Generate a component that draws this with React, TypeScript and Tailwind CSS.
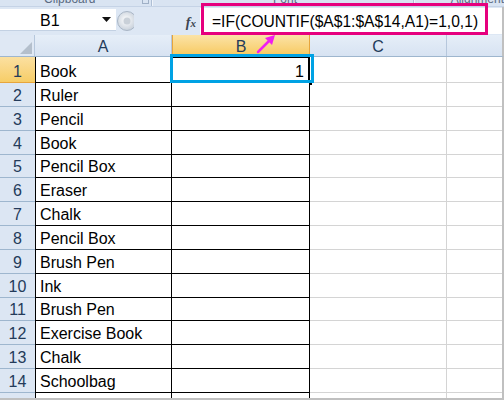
import React from "react";

const items = [
  "Book",
  "Ruler",
  "Pencil",
  "Book",
  "Pencil Box",
  "Eraser",
  "Chalk",
  "Pencil Box",
  "Brush Pen",
  "Ink",
  "Brush Pen",
  "Exercise Book",
  "Chalk",
  "Schoolbag",
];

// row heights include the bottom gridline
const heights = [26, 24, 24, 24, 23, 24, 24, 24, 24, 24, 23, 24, 24, 24];

function RibbonStrip() {
  return (
    <div className="flex h-[7px] overflow-hidden bg-[#d9e4f2] border-b border-[#c5d3e6] text-[12px] text-[#5a6b82]">
      <div className="relative w-[140px] flex justify-center">
        <span className="-mt-[8px] leading-[14px]">Clipboard</span>
      </div>
      <div className="w-[12px] flex justify-center">
        <div className="-mt-[3px] w-[7px] h-[7px] border border-[#9fb0c6]" />
      </div>
      <div className="w-[2px] border-l border-[#aebfd5] bg-white/60" />
      <div className="w-[150px] flex justify-end pr-[6px]">
        <span className="-mt-[8px] leading-[14px]">Font</span>
      </div>
      <div className="w-[110px]" />
      <div className="w-[2px] border-l border-[#aebfd5] bg-white/60" />
      <div className="flex-1 flex pl-[36px]">
        <span className="-mt-[8px] leading-[14px]">Alignment</span>
      </div>
    </div>
  );
}

function FormulaBar() {
  return (
    <div className="flex h-[28px] bg-[#dde7f4] border-r-2 border-[#c0c0c0]">
      <div className="mt-[2px] h-[22px] w-[116px] bg-white border-b border-[#c3d1e3] flex items-center">
        <span className="ml-[40px] mt-[2px] text-[16px] leading-none text-black">B1</span>
        <svg className="ml-auto mr-[5px]" width="9" height="5" viewBox="0 0 9 5">
          <path d="M0 0 L9 0 L4.5 5 Z" fill="#111" />
        </svg>
      </div>
      <div className="w-[22px] flex items-center justify-start">
        <svg width="18" height="22" viewBox="0 0 18 22">
          <defs>
            <radialGradient id="knob" cx="0.45" cy="0.45" r="0.6">
              <stop offset="0" stopColor="#ffffff" />
              <stop offset="1" stopColor="#c4cdd8" />
            </radialGradient>
          </defs>
          <circle cx="11" cy="11" r="9.5" fill="url(#knob)" stroke="#a9b6c6" />
          <circle cx="11" cy="11" r="3.5" fill="#c9d0d8" />
        </svg>
      </div>
      <div className="w-[62px] flex items-center justify-end pr-[4px]">
        <span className="mt-[2px] font-['Liberation_Serif',serif] italic font-bold text-[14px] text-[#3c4450]">
          f<span className="text-[11px]">x</span>
        </span>
      </div>
      <div className="mt-[1px] h-[26px] flex-1 bg-white flex items-center pl-[12px]">
        <span className="mt-[2px] text-[15.6px] leading-none text-black whitespace-nowrap">
          =IF(COUNTIF($A$1:$A$14,A1)=1,0,1)
        </span>
      </div>
    </div>
  );
}

function HeaderRow() {
  return (
    <div className="flex h-[22px] border-b border-[#9eb6ce] border-r-2 border-r-[#c0c0c0] text-[16px] leading-none text-[#243b5a]">
      <div className="w-[35px] bg-[#dfe8f4] border-r border-[#b6c7dc] flex items-end justify-end p-[2px]">
        <svg width="12" height="12" viewBox="0 0 12 12">
          <path d="M12 0 L12 12 L0 12 Z" fill="#b4bfcc" />
        </svg>
      </div>
      <div className="w-[137px] pt-[3px] bg-gradient-to-b from-[#e6eef8] to-[#d7e3f2] border-r border-[#b6c7dc] flex items-center justify-center">
        A
      </div>
      <div className="w-[138px] pt-[3px] bg-gradient-to-b from-[#fbe3a6] to-[#f7c95c] border-x border-[#e7a53c] flex items-center justify-center">
        B
      </div>
      <div className="w-[137px] pt-[3px] bg-gradient-to-b from-[#e6eef8] to-[#d7e3f2] border-r border-[#b6c7dc] flex items-center justify-center">
        C
      </div>
      <div className="flex-1 bg-gradient-to-b from-[#e6eef8] to-[#d7e3f2]" />
    </div>
  );
}

function DataRow({ n, text, h }: { n: number; text: string; h: number }) {
  const selected = n === 1;
  return (
    <div className="flex border-r-2 border-[#c0c0c0] text-[16px] leading-[16px]" style={{ height: h }}>
      <div
        className={`w-[35px] flex items-end justify-center pb-[2px] border-b ${
          selected
            ? "bg-gradient-to-b from-[#fbe0a0] to-[#f7cd66] border-[#e7a53c] text-[#243b5a]"
            : "bg-[#dce6f3] border-[#9eb6ce] text-[#243b5a]"
        }`}
      >
        {n}
      </div>
      <div className="w-[137px] border-l border-r border-b border-black flex items-end pl-[4px] pb-[2px] text-black">
        {text}
      </div>
      <div className="relative w-[138px] border-r border-b border-black flex items-end justify-end pr-[5px] pb-[2px] text-black">
        {selected && (
          <>
            <div className="absolute -left-[1px] -top-[1px] w-[139px] h-[26px] border-2 border-black" />
            <div className="absolute -right-[4px] -bottom-[4px] w-[5px] h-[5px] bg-black border border-white" />
          </>
        )}
        {selected ? "1" : ""}
      </div>
      <div className="w-[137px] border-r border-b border-[#d4d4d4]" />
      <div className="flex-1 border-b border-[#d4d4d4]" />
    </div>
  );
}

export default function App() {
  return (
    <div className="relative w-[504px] h-[400px] overflow-hidden bg-white font-['Liberation_Sans',Arial,sans-serif]">
      <RibbonStrip />
      <FormulaBar />
      <HeaderRow />
      {items.map((t, i) => (
        <DataRow key={i} n={i + 1} text={t} h={heights[i]} />
      ))}
      <div className="flex h-[5px] border-r-2 border-[#c0c0c0]">
        <div className="w-[35px] bg-[#dce6f3]" />
        <div className="w-[137px] border-l border-r border-black" />
        <div className="w-[138px] border-r border-black" />
        <div className="w-[137px] border-r border-[#d4d4d4]" />
        <div className="flex-1" />
      </div>
      <div className="h-[3px] bg-[#c0c0c0]" />

      {/* annotations */}
      <div className="absolute left-[201px] top-[3px] w-[287px] h-[32px] border-[3px] border-[#e6007e]" />
      <div className="absolute left-[170px] top-[54px] w-[144px] h-[29px] border-[3px] border-[#00a2e4]" />
      <svg className="absolute left-[254px] top-[32px]" width="24" height="24" viewBox="0 0 24 24">
        <line x1="4" y1="20" x2="17" y2="7" stroke="#f01ef0" strokeWidth="2.5" strokeLinecap="round" />
        <path d="M21 3 L11 6 L18 13 Z" fill="#f01ef0" />
      </svg>
    </div>
  );
}
